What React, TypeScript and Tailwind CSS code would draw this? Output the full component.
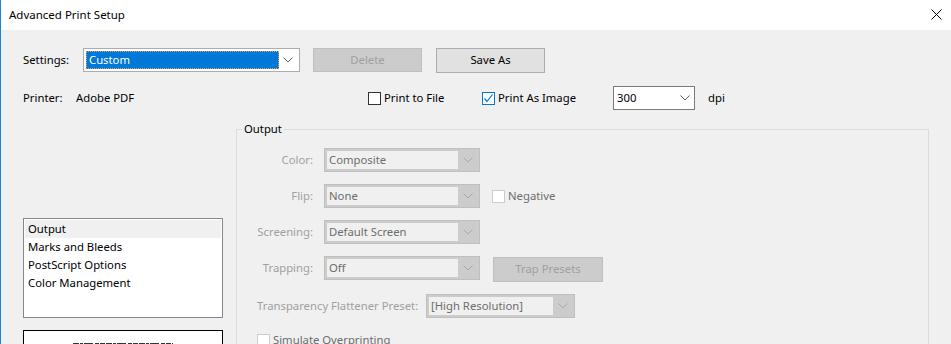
import React from "react";

const FONT = { fontFamily: '"Noto Sans", "Liberation Sans", sans-serif' };

function Chevron({ color = "#606060" }: { color?: string }) {
  return (
    <svg width="10" height="6" viewBox="0 0 10 6" className="shrink-0">
      <polyline points="0.5,0.5 5,5 9.5,0.5" fill="none" stroke={color} strokeWidth="1" />
    </svg>
  );
}

function Checkbox({ checked = false, disabled = false, blue = false }: { checked?: boolean; disabled?: boolean; blue?: boolean }) {
  const border = disabled ? "border-[#cccccc]" : blue ? "border-[#0078d7]" : "border-[#333333]";
  return (
    <div className={`w-[13px] h-[13px] border ${border} bg-white flex items-center justify-center shrink-0`}>
      {checked && (
        <svg width="11" height="11" viewBox="0 0 11 11">
          <polyline points="1.5,5.5 4,8.5 9.5,1.5" fill="none" stroke="#0078d7" strokeWidth="1.2" />
        </svg>
      )}
    </div>
  );
}

function DisabledSelect({ value, width }: { value: string; width: string }) {
  return (
    <div className={`${width} h-[24px] bg-[#cccccc] border border-[#bfbfbf] flex items-center p-[2px]`}>
      <div className="flex-1 h-full bg-[#f0f0f0] flex items-center pl-[2px] text-[#6d6d6d] whitespace-nowrap">{value}</div>
      <div className="w-[19px] flex items-center justify-center">
        <Chevron color="#a8a8a8" />
      </div>
    </div>
  );
}

function DisabledRow({ label, value, extra }: { label: string; value: string; extra?: React.ReactNode }) {
  return (
    <div className="flex items-center h-[24px]">
      <div className="w-[76px] text-right text-[#a0a0a0]">{label}</div>
      <div className="ml-[11px]">
        <DisabledSelect value={value} width="w-[156px]" />
      </div>
      {extra}
    </div>
  );
}

export default function App() {
  return (
    <div style={FONT} className="w-[951px] h-[344px] overflow-hidden bg-[#f0f0f0] border-l border-[#1883d7] text-[11.3px] text-black leading-[16px]">
      {/* Title bar */}
      <div className="h-[30px] bg-white flex items-center justify-between pl-[8px] pr-[9px]">
        <span className="mt-[-1px] text-[11.5px]">Advanced Print Setup</span>
        <svg width="11" height="11" viewBox="0 0 11 11" className="mt-[-2px]">
          <line x1="0.5" y1="0.5" x2="10.5" y2="10.5" stroke="#000" strokeWidth="1" />
          <line x1="10.5" y1="0.5" x2="0.5" y2="10.5" stroke="#000" strokeWidth="1" />
        </svg>
      </div>

      <div className="pt-[18px] pl-[22px]">
        {/* Settings row */}
        <div className="flex items-center h-[24px]">
          <div className="w-[60px]">Settings:</div>
          <div className="w-[217px] h-[24px] border border-[#adadad] bg-white flex items-center p-[2px]">
            <div className="flex-1 h-full bg-[#0078d7] text-white flex items-center pl-[2px] border border-dotted border-[#f0a040]">Custom</div>
            <div className="w-[18px] flex items-center justify-center">
              <Chevron />
            </div>
          </div>
          <div className="ml-[13px] w-[109px] h-[24px] bg-[#cccccc] border border-[#bfbfbf] flex items-center justify-center text-[#a0a0a0]">Delete</div>
          <div className="ml-[14px] w-[109px] h-[25px] bg-[#e1e1e1] border border-[#adadad] flex items-center justify-center">Save As</div>
        </div>

        {/* Printer row */}
        <div className="flex items-center h-[24px] mt-[14px]">
          <div className="w-[53px]">Printer:</div>
          <div className="w-[292px]">Adobe PDF</div>
          <Checkbox />
          <span className="ml-[3px] w-[98px]">Print to File</span>
          <Checkbox checked blue />
          <span className="ml-[3px] w-[115px]">Print As Image</span>
          <div className="w-[82px] h-[24px] border border-[#7a7a7a] bg-white flex items-center pl-[3px]">
            <span className="flex-1">300</span>
            <div className="w-[18px] flex items-center justify-center">
              <Chevron />
            </div>
          </div>
          <span className="ml-[13px]">dpi</span>
        </div>

        {/* Main area */}
        <div className="flex mt-[11px]">
          <div className="w-[200px] pt-[97px] shrink-0">
            <div className="h-[100px] border border-[#828790] bg-white p-[1px]">
              <div className="h-[18px] bg-[#f0f0f0] pl-[3px] flex items-center">Output</div>
              <div className="h-[18px] pl-[3px] flex items-center">Marks and Bleeds</div>
              <div className="h-[18px] pl-[3px] flex items-center">PostScript Options</div>
              <div className="h-[18px] pl-[3px] flex items-center">Color Management</div>
            </div>
            <div className="mt-[12px] h-[40px] border border-black bg-white flex justify-center pt-[11px]">
              <svg width="100" height="3" viewBox="0 0 100 3">
                <line x1="0" y1="1.5" x2="100" y2="1.5" stroke="#333" strokeWidth="1" strokeDasharray="6 1 3 1 9 2 4 1 5 1" />
              </svg>
            </div>
          </div>

          <fieldset className="ml-[13px] w-[693px] h-[260px] border border-[#dcdcdc] shrink-0">
            <legend className="ml-[5px] px-[2px]">Output</legend>
            <div className="flex flex-col gap-[12px] pt-[11px]">
              <DisabledRow label="Color:" value="Composite" />
              <DisabledRow
                label="Flip:"
                value="None"
                extra={
                  <div className="flex items-center ml-[12px]">
                    <Checkbox disabled />
                    <span className="ml-[3px] text-[#6d6d6d]">Negative</span>
                  </div>
                }
              />
              <DisabledRow label="Screening:" value="Default Screen" />
              <DisabledRow
                label="Trapping:"
                value="Off"
                extra={
                  <div className="ml-[13px] w-[110px] h-[25px] mt-[2px] bg-[#cccccc] border border-[#bfbfbf] flex items-center justify-center text-[#a0a0a0]">Trap Presets</div>
                }
              />
              <div className="flex items-center h-[24px] mt-[2px] pl-[20px]">
                <div className="w-[169px] text-[#a0a0a0] whitespace-nowrap">Transparency Flattener Preset:</div>
                <DisabledSelect value="[High Resolution]" width="w-[149px]" />
              </div>
              <div className="flex items-center pl-[20px] mt-[2px]">
                <Checkbox disabled />
                <span className="ml-[3px] text-[#6d6d6d] whitespace-nowrap">Simulate Overprinting</span>
              </div>
            </div>
          </fieldset>
        </div>
      </div>
    </div>
  );
}
